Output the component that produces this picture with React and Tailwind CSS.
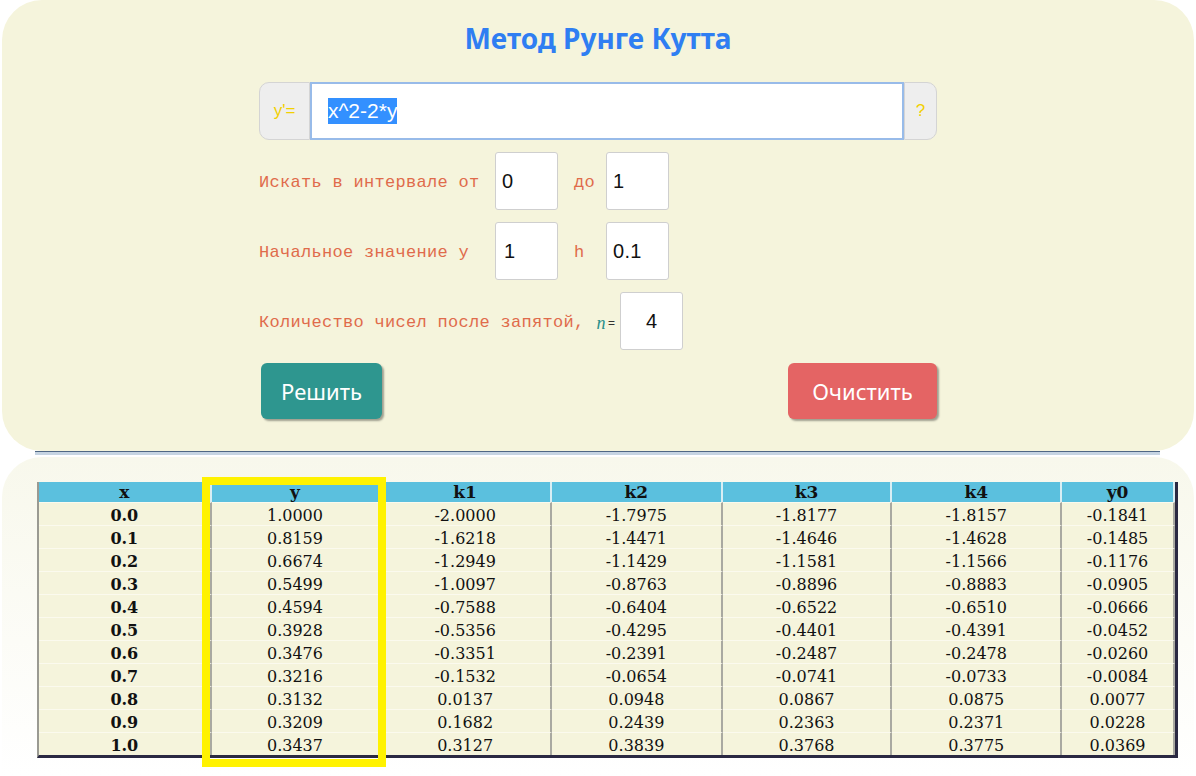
const rows = [
  ['0.0', '1.0000', '-2.0000', '-1.7975', '-1.8177', '-1.8157', '-0.1841'],
  ['0.1', '0.8159', '-1.6218', '-1.4471', '-1.4646', '-1.4628', '-0.1485'],
  ['0.2', '0.6674', '-1.2949', '-1.1429', '-1.1581', '-1.1566', '-0.1176'],
  ['0.3', '0.5499', '-1.0097', '-0.8763', '-0.8896', '-0.8883', '-0.0905'],
  ['0.4', '0.4594', '-0.7588', '-0.6404', '-0.6522', '-0.6510', '-0.0666'],
  ['0.5', '0.3928', '-0.5356', '-0.4295', '-0.4401', '-0.4391', '-0.0452'],
  ['0.6', '0.3476', '-0.3351', '-0.2391', '-0.2487', '-0.2478', '-0.0260'],
  ['0.7', '0.3216', '-0.1532', '-0.0654', '-0.0741', '-0.0733', '-0.0084'],
  ['0.8', '0.3132', '0.0137', '0.0948', '0.0867', '0.0875', '0.0077'],
  ['0.9', '0.3209', '0.1682', '0.2439', '0.2363', '0.2371', '0.0228'],
  ['1.0', '0.3437', '0.3127', '0.3839', '0.3768', '0.3775', '0.0369'],
]

const headers = ['x', 'y', 'k1', 'k2', 'k3', 'k4', 'y0']
const widths = [173, 169, 172, 171, 170, 170, 113]

const comic = { fontFamily: '"Comic Sans MS", "Noto Sans", sans-serif' }

function NumBox({ value, className = '' }) {
  return (
    <div
      className={`flex h-[58px] w-[63px] items-center rounded-[3px] border border-[#cfcfcf] bg-white pl-[6px] text-[20px] text-[#111] ${className}`}
      style={{ fontFamily: '"Liberation Sans", Arial, sans-serif' }}
    >
      {value}
    </div>
  )
}

export default function App() {
  return (
    <div className="h-[776px] w-[1196px] overflow-hidden bg-white">
      <div className="mx-[2px] h-[451px] rounded-[40px] bg-[#f5f4dc] pt-[18px]">
        <h1 className="text-center text-[28px] font-bold leading-[40px] text-[#2f7ef2]" style={comic}>
          Метод Рунге Кутта
        </h1>

        <div className="mx-auto mt-[24px] w-[678px]">
          <div className="flex h-[58px]">
            <div
              className="flex w-[51px] items-center justify-center rounded-l-[10px] border border-[#d4d4d4] bg-[#eeeeee] text-[17px] text-[#f2d000]"
              style={{ fontFamily: '"Liberation Sans", Arial, sans-serif' }}
            >
              y'=
            </div>
            <div
              className="flex flex-1 items-center border-2 border-[#98bbe9] bg-white pl-[16px] text-[21px]"
              style={{ fontFamily: '"Liberation Sans", Arial, sans-serif' }}
            >
              <span className="bg-[#3390ff] leading-[26px] text-white">x^2-2*y</span>
            </div>
            <div
              className="flex w-[33px] items-center justify-center rounded-r-[10px] border border-[#d4d4d4] bg-[#eeeeee] text-[17px] text-[#f2d000]"
              style={{ fontFamily: '"Liberation Sans", Arial, sans-serif' }}
            >
              ?
            </div>
          </div>

          <div
            className="mt-[12px] flex flex-col gap-[12px] text-[17px] tracking-[0.3px] text-[#e06b4b]"
            style={{ fontFamily: '"Liberation Mono", "Courier New", monospace' }}
          >
            <div className="flex items-center">
              <div className="w-[236px] whitespace-pre pt-[4px]">Искать в интервале от</div>
              <NumBox value="0" />
              <div className="w-[48px] pl-[16px] pt-[4px]">до</div>
              <NumBox value="1" />
            </div>
            <div className="flex items-center">
              <div className="w-[236px] whitespace-pre pt-[4px]">Начальное значение y</div>
              <NumBox value="1" className="pl-[8px]" />
              <div className="w-[48px] pl-[16px] pt-[4px]">h</div>
              <NumBox value="0.1" />
            </div>
            <div className="flex items-center">
              <div className="whitespace-pre pt-[4px]">Количество чисел после запятой,</div>
              <span
                className="ml-[12px] pt-[4px] text-[18px] italic text-[#2a8f8a]"
                style={{ fontFamily: '"Liberation Serif", serif' }}
              >
                n
              </span>
              <span
                className="ml-[2px] mr-[5px] pt-[4px] text-[12px] text-[#333]"
                style={{ fontFamily: '"Liberation Sans", sans-serif' }}
              >
                =
              </span>
              <NumBox value="4" className="w-[58px] justify-center pl-0 pr-[6px]" />
            </div>
          </div>

          <div className="mt-[13px] flex justify-between pl-[2px]">
            <button
              className="h-[56px] w-[121px] rounded-[6px] bg-[#2e968f] text-[22px] text-white shadow-[2px_2px_2px_rgba(0,0,0,0.35)]"
              style={comic}
            >
              Решить
            </button>
            <button
              className="h-[56px] w-[149px] rounded-[6px] bg-[#e46464] text-[22px] text-white shadow-[2px_2px_2px_rgba(0,0,0,0.35)]"
              style={comic}
            >
              Очистить
            </button>
          </div>
        </div>
      </div>

      <div className="ml-[35px] h-[4px] w-[1125px] border-t border-[#4f6784] bg-[#c6d4e2]" />

      <div className="mx-[2px] mt-[2px] h-[319px] rounded-t-[40px] bg-gradient-to-b from-[#f8f8ec] to-white pl-[35px] pt-[25px]">
        <div className="relative w-[1141px]">
          <table
            className="table-fixed border-separate border-spacing-0 border-b-[3px] border-l-2 border-r-[3px] border-b-[#2a2942] border-l-[#9a9a92] border-r-[#2a2942] bg-[#f5f4dc] text-[#111]"
            style={{ fontFamily: '"DejaVu Serif", Georgia, serif' }}
          >
            <colgroup>
              {widths.map((w, i) => (
                <col key={i} style={{ width: w }} />
              ))}
            </colgroup>
            <thead>
              <tr className="h-[20px] bg-[#5bc0de]">
                {headers.map((h) => (
                  <th
                    key={h}
                    className="border-r-2 border-r-[#d8eef4] p-0 text-center text-[17px] font-bold leading-[20px]"
                  >
                    {h}
                  </th>
                ))}
              </tr>
            </thead>
            <tbody>
              {rows.map((r) => (
                <tr key={r[0]} className="h-[23px]">
                  {r.map((v, i) => (
                    <td
                      key={i}
                      className={`border-r-2 border-t border-r-[#a9a9a1] border-t-[#fbfaee] p-0 pt-[4px] text-center text-[16px] leading-[18px] ${
                        i === 0 ? 'font-bold' : ''
                      }`}
                    >
                      {v}
                    </td>
                  ))}
                </tr>
              ))}
            </tbody>
          </table>
          <div className="pointer-events-none absolute left-[165px] top-[-5px] h-[290px] w-[184px] border-[8px] border-[#fff200]" />
        </div>
      </div>
    </div>
  )
}
